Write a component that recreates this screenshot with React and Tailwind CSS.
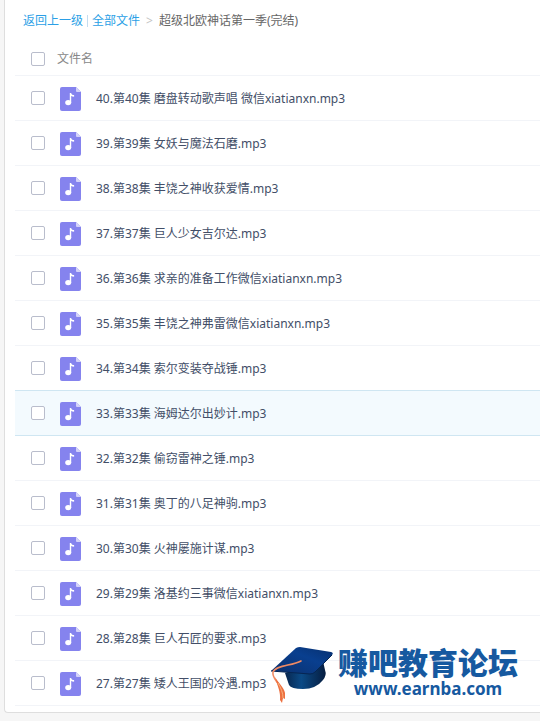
import React, { useState } from 'react'

const FILES = [
  '40.第40集 磨盘转动歌声唱 微信xiatianxn.mp3',
  '39.第39集 女妖与魔法石磨.mp3',
  '38.第38集 丰饶之神收获爱情.mp3',
  '37.第37集 巨人少女吉尔达.mp3',
  '36.第36集 求亲的准备工作微信xiatianxn.mp3',
  '35.第35集 丰饶之神弗雷微信xiatianxn.mp3',
  '34.第34集 索尔变装夺战锤.mp3',
  '33.第33集 海姆达尔出妙计.mp3',
  '32.第32集 偷窃雷神之锤.mp3',
  '31.第31集 奥丁的八足神驹.mp3',
  '30.第30集 火神屡施计谋.mp3',
  '29.第29集 洛基约三事微信xiatianxn.mp3',
  '28.第28集 巨人石匠的要求.mp3',
  '27.第27集 矮人王国的冷遇.mp3',
]

const ACTIVE_INDEX = 7

const getRowClass = (index) => {
  if (index === ACTIVE_INDEX) return 'h-[45px] border-b border-[#cfe6f2] bg-[#f3fafe]'
  // the row above the active one carries its top line
  if (index === ACTIVE_INDEX - 1) return 'h-[45px] border-b border-[#cfe6f2]'
  return 'h-[45px] border-b border-[#f2f4f8]'
}

const Checkbox = ({ label, checked, onChange }) => (
  <input
    type="checkbox"
    aria-label={label}
    checked={checked}
    onChange={onChange}
    className="block size-3.5 appearance-none rounded-xs border border-[#b9bdcc] bg-white checked:border-[#8582ee] checked:bg-[#8582ee]"
  />
)

const MusicIcon = () => (
  <svg width="21" height="24" viewBox="0 0 21 24" className="block" aria-hidden="true">
    <path d="M2 0H16L21 5V22a2 2 0 0 1-2 2H2a2 2 0 0 1-2-2V2a2 2 0 0 1 2-2Z" fill="#8583ee" />
    <path d="M16 0L21 5H17a1 1 0 0 1-1-1Z" fill="#d3d2fa" />
    <ellipse cx="8.2" cy="15.6" rx="3" ry="2.6" fill="#fff" />
    <path d="M9.8 6H11.2c.2 1.4 1.1 1.9 2.9 2.1v1.7c-1.2 0-2.2-.2-2.9-.7v6.600H9.8Z" fill="#fff" />
  </svg>
)

const CapLogo = () => (
  <svg width="64" height="58" viewBox="0 0 64 58" aria-hidden="true">
    <defs>
      <linearGradient id="capTop" x1="0" y1="1" x2="1" y2="0">
        <stop offset="0" stopColor="#0b2f6b" />
        <stop offset="0.6" stopColor="#093f8f" />
        <stop offset="1" stopColor="#07306f" />
      </linearGradient>
      <linearGradient id="capBase" x1="0" y1="0" x2="1" y2="0">
        <stop offset="0" stopColor="#08264e" />
        <stop offset="0.4" stopColor="#0b4a86" />
        <stop offset="1" stopColor="#061d40" />
      </linearGradient>
    </defs>
    <path d="M15 26L19 38Q21 42 33 42Q46 42 53 33Q57 28 55 23L53 14Z" fill="url(#capBase)" />
    <path d="M1 24L26 1Q28 0 30 0L61 5Q64 6 62 8L45 25Q43 27 40 27Z" fill="url(#capTop)" />
    <path d="M1 24L40 27Q43 27 45 25L62 8" fill="none" stroke="#062552" />
    <path
      d="M31 14C22 19 6 18 3 25C2 30 6 33 9 38"
      fill="none"
      stroke="#f08a63"
      strokeWidth="1.6"
      strokeLinecap="round"
    />
    <path d="M5 30C8 35 14 41 15 46L15 52L13 51L12 56L10 53C11 45 7 38 5 30Z" fill="#ed7040" />
    <path d="M8 36C11 41 13 46 13 51" fill="none" stroke="#f8b27f" />
  </svg>
)

const App = () => {
  const [selected, setSelected] = useState([])

  const isAllSelected = selected.length === FILES.length

  const toggleAll = () => {
    setSelected(isAllSelected ? [] : FILES)
  }

  const toggleFile = (file) => {
    setSelected((prev) =>
      prev.includes(file) ? prev.filter((item) => item !== file) : [...prev, file]
    )
  }

  return (
    <div className="relative min-h-screen bg-[#f6f6f6] pb-2 pl-1 font-['Noto_Sans','Noto_Sans_CJK_SC',sans-serif] text-xs text-[#424e67]">
      <main className="rounded-bl-sm border-b border-l border-[#dedede] bg-white pb-1.5 pl-2.5">
        <nav className="flex h-11 items-center pb-0.5 pl-2">
          <a href="#back" className="text-[#2b9fe6]">
            返回上一级
          </a>
          <span className="mx-1 h-3 w-px bg-[#c4dcef]" />
          <a href="#all" className="text-[#2b9fe6]">
            全部文件
          </a>
          <span className="mx-1.5 text-[#c4c4c4]">&gt;</span>
          <span className="text-[#666]">超级北欧神话第一季(完结)</span>
        </nav>

        <table className="w-full border-collapse text-left">
          <thead>
            <tr className="h-[31px] border-b border-[#f2f4f8]">
              <th className="w-[42px] pl-4">
                <Checkbox label="全选" checked={isAllSelected} onChange={toggleAll} />
              </th>
              <th colSpan={2} className="font-normal text-[#888]">
                文件名
              </th>
            </tr>
          </thead>
          <tbody>
            {FILES.map((file, index) => (
              <tr key={file} className={getRowClass(index)}>
                <td className="w-[42px] pl-4">
                  <Checkbox
                    label={file}
                    checked={selected.includes(file)}
                    onChange={() => toggleFile(file)}
                  />
                </td>
                <td className="w-[39px] pt-0.5 pl-[3px]">
                  <MusicIcon />
                </td>
                <td className="pt-0.5">{file}</td>
              </tr>
            ))}
          </tbody>
        </table>
      </main>

      <div className="absolute right-[22px] bottom-4 flex items-start gap-1 text-[#1659a0]">
        <CapLogo />
        <div className="text-center">
          <p className="font-['Noto_Sans_CJK_SC',sans-serif] text-[30px] leading-7 font-black">
            赚吧教育论坛
          </p>
          <p className="mt-1 text-[17px] leading-5 font-bold">www.earnba.com</p>
        </div>
      </div>
    </div>
  )
}

export default App
